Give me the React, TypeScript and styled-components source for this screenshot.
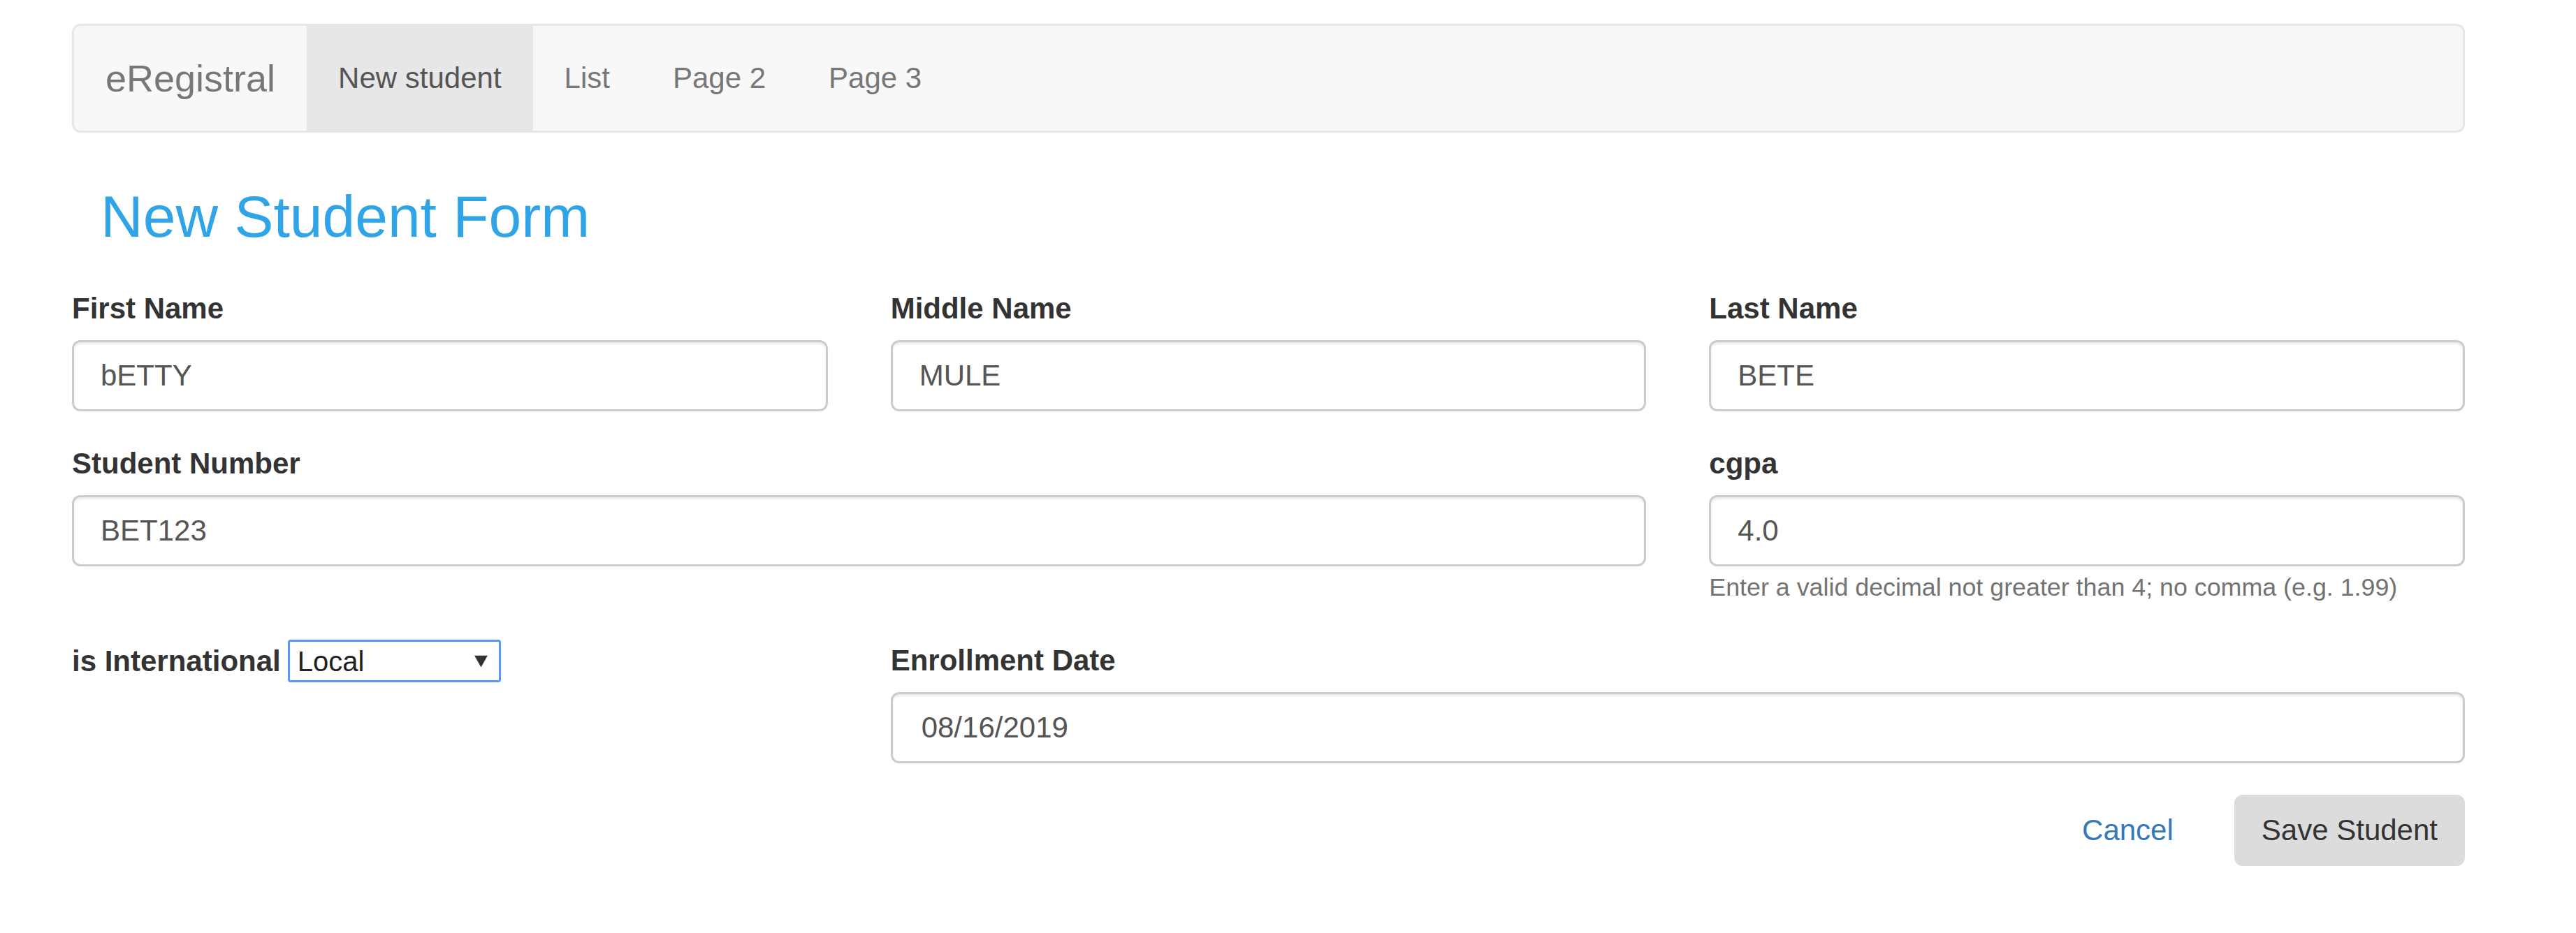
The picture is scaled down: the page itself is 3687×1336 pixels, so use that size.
import React from "react";
import styled, { createGlobalStyle } from "styled-components";

const GlobalStyle = createGlobalStyle`
  html, body { margin: 0; padding: 0; background: #fff; }
  body {
    font-family: "Liberation Sans", Arial, Helvetica, sans-serif;
    font-size: 42px;
    line-height: 60px;
    color: #333;
  }
  * { box-sizing: border-box; }
`;

const Page = styled.div`
  width: 3425px;
  margin-left: 103px;
  padding-top: 34px;
`;

const Navbar = styled.nav`
  display: flex;
  align-items: stretch;
  height: 156px;
  background: #f8f8f8;
  border: 3px solid #e7e7e7;
  border-radius: 12px;
`;

const Brand = styled.a`
  display: block;
  padding: 45px;
  font-size: 54px;
  line-height: 60px;
  color: #777;
  text-decoration: none;
`;

const NavList = styled.ul`
  display: flex;
  margin: 0;
  padding: 0;
  list-style: none;
`;

const NavLink = styled.a<{ $active?: boolean }>`
  display: block;
  padding: 45px;
  font-size: 42px;
  line-height: 60px;
  text-decoration: none;
  color: ${(p) => (p.$active ? "#555" : "#777")};
  background: ${(p) => (p.$active ? "#e7e7e7" : "transparent")};
`;

const Title = styled.h2`
  margin: 74px 0 56px;
  padding-left: 41px;
  font-size: 84px;
  line-height: 92px;
  font-weight: 400;
  color: #2fa4e7;
`;

const FormRow = styled.div`
  display: grid;
  grid-template-columns: repeat(3, minmax(0, 1fr));
  column-gap: 90px;
  align-items: start;
`;

const Field = styled.div<{ $span?: number }>`
  grid-column: span ${(p) => p.$span ?? 1};
  margin-bottom: 45px;
`;

const Label = styled.label`
  display: block;
  margin-bottom: 15px;
  font-weight: 700;
  line-height: 60px;
`;

const Input = styled.input<{ $indent?: number }>`
  display: block;
  width: 100%;
  height: 102px;
  padding: 18px 36px 18px ${(p) => 38 + (p.$indent ?? 0)}px;
  border: 3px solid #ccc;
  border-radius: 12px;
  background: #fff;
  box-shadow: inset 0 3px 3px rgba(0, 0, 0, 0.075);
  font-family: inherit;
  font-size: 42px;
  line-height: 60px;
  color: #555;
  outline: none;
`;

const Help = styled.div`
  font-size: 35.8px;
  line-height: 60px;
  color: #737373;
`;

const InlineField = styled.div`
  display: flex;
  align-items: baseline;
  gap: 10px;
`;

const InlineLabel = styled.label`
  font-weight: 700;
  line-height: 60px;
`;

const SelectWrap = styled.span`
  position: relative;
  display: inline-block;
  width: 305px;
`;

const Select = styled.select`
  display: block;
  width: 100%;
  height: 61px;
  padding: 0 44px 0 11px;
  border: 3px solid #5b97f0;
  border-radius: 4px;
  background: #fff;
  font-family: "Liberation Sans", Arial, sans-serif;
  font-size: 40px;
  color: #222;
  appearance: none;
  -webkit-appearance: none;
  outline: none;
`;

const Arrow = styled.svg`
  position: absolute;
  right: 19px;
  top: 50%;
  width: 19px;
  height: 17px;
  transform: translateY(-50%);
  pointer-events: none;
`;

const Actions = styled.div`
  display: flex;
  justify-content: flex-end;
  align-items: center;
  gap: 48px;
`;

const CancelLink = styled.a`
  display: inline-block;
  padding: 18px 36px;
  border: 3px solid transparent;
  font-size: 42px;
  line-height: 60px;
  color: #337ab7;
  text-decoration: none;
`;

const SaveButton = styled.button`
  height: 102px;
  padding: 0 36px;
  border: 3px solid #dcdcdc;
  border-radius: 12px;
  background: #dcdcdc;
  font-family: inherit;
  font-size: 42px;
  line-height: 60px;
  color: #333;
`;

export default function App() {
  return (
    <>
      <GlobalStyle />
      <Page>
        <Navbar>
          <Brand href="#">eRegistral</Brand>
          <NavList>
            <li><NavLink href="#" $active>New student</NavLink></li>
            <li><NavLink href="#">List</NavLink></li>
            <li><NavLink href="#">Page 2</NavLink></li>
            <li><NavLink href="#">Page 3</NavLink></li>
          </NavList>
        </Navbar>

        <Title>New Student Form</Title>

        <form onSubmit={(e) => e.preventDefault()}>
          <FormRow>
            <Field>
              <Label>First Name</Label>
              <Input defaultValue="bETTY" />
            </Field>
            <Field>
              <Label>Middle Name</Label>
              <Input defaultValue="MULE" />
            </Field>
            <Field>
              <Label>Last Name</Label>
              <Input defaultValue="BETE" />
            </Field>
          </FormRow>

          <FormRow>
            <Field $span={2}>
              <Label>Student Number</Label>
              <Input defaultValue="BET123" />
            </Field>
            <Field>
              <Label>cgpa</Label>
              <Input defaultValue="4.0" />
              <Help>Enter a valid decimal not greater than 4; no comma (e.g. 1.99)</Help>
            </Field>
          </FormRow>

          <FormRow>
            <Field>
              <InlineField>
                <InlineLabel>is International</InlineLabel>
                <SelectWrap>
                  <Select defaultValue="local">
                    <option value="local">Local</option>
                    <option value="international">International</option>
                  </Select>
                  <Arrow viewBox="0 0 19 17">
                    <path d="M0 0 H19 L9.5 17 Z" fill="#333" />
                  </Arrow>
                </SelectWrap>
              </InlineField>
            </Field>
            <Field $span={2}>
              <Label>Enrollment Date</Label>
              <Input defaultValue="08/16/2019" $indent={3} />
            </Field>
          </FormRow>

          <Actions>
            <CancelLink href="#">Cancel</CancelLink>
            <SaveButton type="submit">Save Student</SaveButton>
          </Actions>
        </form>
      </Page>
    </>
  );
}
